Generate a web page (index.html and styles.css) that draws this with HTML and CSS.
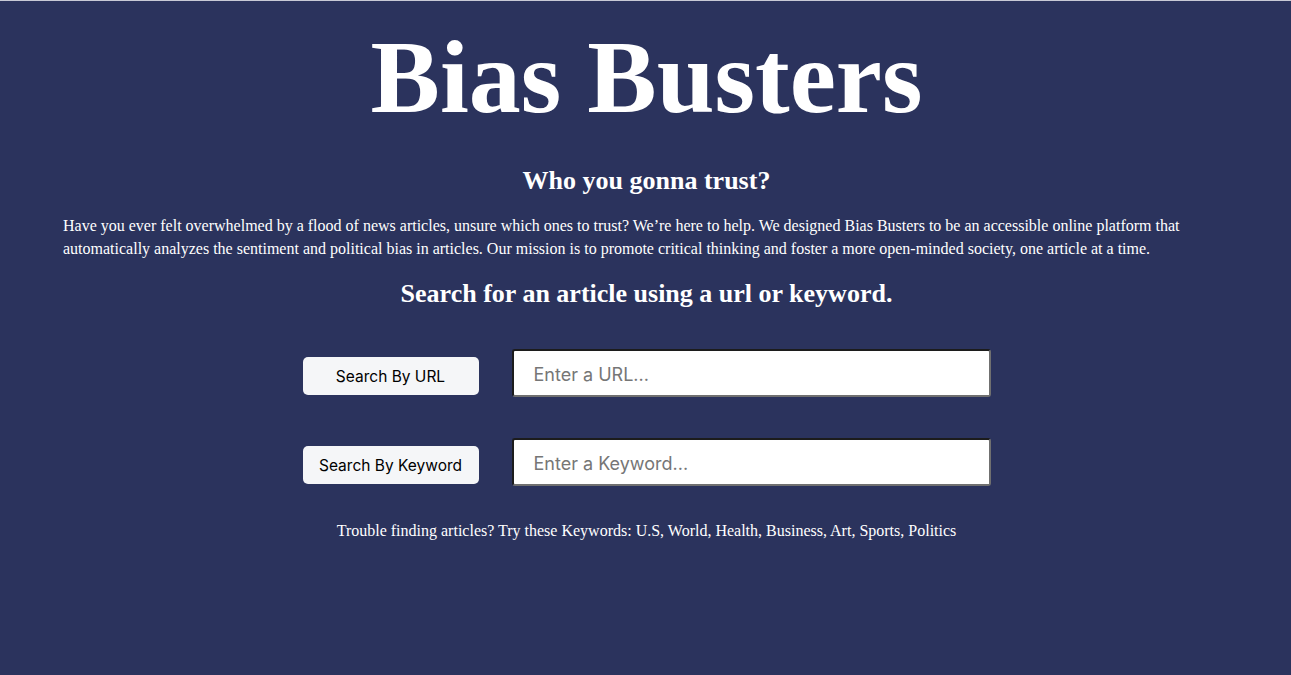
FILE: index.html
```html
<!DOCTYPE html>
<html lang="en">
<head>
<meta charset="utf-8">
<title>Bias Busters</title>
<link rel="stylesheet" href="styles.css">
</head>
<body>
<main class="page">
  <h1 class="title">Bias Busters</h1>
  <h2 class="subtitle">Who you gonna trust?</h2>
  <p class="intro">Have you ever felt overwhelmed by a flood of news articles, unsure which ones to trust? We’re here to help. We designed Bias Busters to be an accessible online platform that automatically analyzes the sentiment and political bias in articles. Our mission is to promote critical thinking and foster a more open-minded society, one article at a time.</p>
  <h2 class="search-heading">Search for an article using a url or keyword.</h2>
  <div class="search-rows">
    <div class="search-row">
      <button class="search-btn" type="button">Search By URL</button>
      <input class="search-input" type="text" placeholder="Enter a URL...">
    </div>
    <div class="search-row">
      <button class="search-btn" type="button">Search By Keyword</button>
      <input class="search-input" type="text" placeholder="Enter a Keyword...">
    </div>
  </div>
  <p class="hint">Trouble finding articles? Try these Keywords: U.S, World, Health, Business, Art, Sports, Politics</p>
</main>
</body>
</html>
```

FILE: styles.css
```css
html {
  background: #2b335d;
  border-top: 1px solid #c8cad6;
}

body {
  margin: 0;
  min-height: 674px;
  background: #2b335d;
  color: #ffffff;
  font-family: "Liberation Serif", "Times New Roman", serif;
}

.page {
  padding: 0 63px 0 65px;
  display: flex;
  flex-direction: column;
  align-items: center;
}

.title {
  margin: 24px 0 0;
  font-size: 104px;
  line-height: 104px;
  font-weight: bold;
}

.subtitle {
  margin: 37px 0 0;
  font-size: 26px;
  line-height: 30px;
  font-weight: bold;
}

.intro {
  align-self: stretch;
  margin: 18px 0 0 -2px;
  font-size: 16px;
  line-height: 23px;
  text-align: left;
}

.search-heading {
  margin: 19px 0 0;
  font-size: 26px;
  line-height: 30px;
  font-weight: bold;
}

.search-rows {
  margin-top: 40px;
  display: flex;
  flex-direction: column;
  gap: 41px;
}

.search-row {
  display: flex;
  align-items: flex-start;
  gap: 33px;
}

.search-btn {
  margin-top: 8px;
  width: 176px;
  height: 38px;
  border: none;
  border-radius: 5px;
  background: #f5f6f8;
  color: #000000;
  font-family: "Inter", "Noto Sans", sans-serif;
  font-size: 15.5px;
  padding: 0;
}

.search-input {
  box-sizing: border-box;
  width: 479px;
  height: 48px;
  border-width: 2px;
  border-style: solid;
  border-color: #1c1c1c #707070 #707070 #1c1c1c;
  border-radius: 3px;
  background: #ffffff;
  padding: 2px 20px 0;
  font-family: "Inter", "Noto Sans", sans-serif;
  font-size: 18px;
  color: #222222;
  outline: none;
}

.search-input::placeholder {
  color: #767676;
}

.hint {
  margin: 33px 0 0;
  font-size: 16px;
  line-height: 23px;
}
```
